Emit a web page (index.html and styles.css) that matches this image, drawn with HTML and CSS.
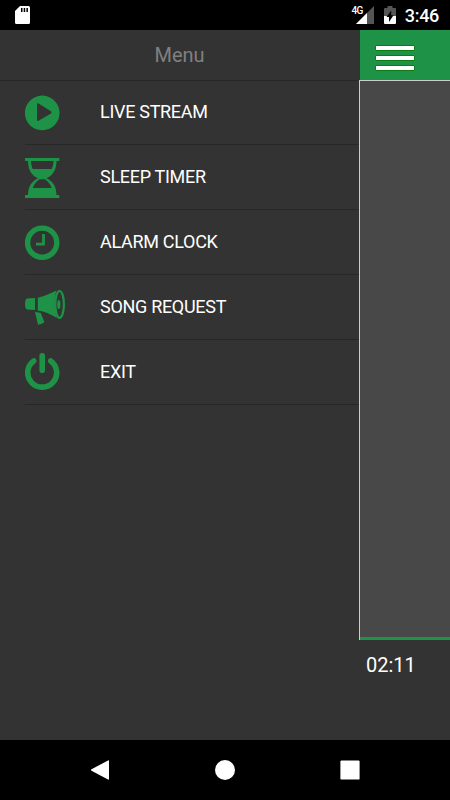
FILE: index.html
```html
<!DOCTYPE html>
<html lang="en">

<head>
    <meta charset="UTF-8">
    <meta name="viewport" content="width=device-width, initial-scale=1.0">
    <title>Menu</title>
    <link rel="stylesheet" href="styles.css">
</head>

<body>

<div class="status-bar">
    <svg class="sd-card" width="16" height="18" viewBox="0 0 16 18">
        <path fill="#fff" d="M5 0h8.500q1.500 0 1.500 1.500v15q0 1.500-1.500 1.500h-12Q0 18 0 16.500V5z"/>
        <path fill="#000" d="M6 2h1.500v4H6zM8.700 2h1.500v4H8.700zM11.400 2h1.500v4h-1.500z"/>
    </svg>
    <div class="status-icons">
        <span class="network">4G</span>
        <svg class="signal" width="18" height="18" viewBox="0 0 18 18">
            <path fill="#555" d="M18 0v18H0z"/>
            <path fill="#fff" d="M11 7v11H0z"/>
        </svg>
        <svg class="battery" width="12" height="18" viewBox="0 0 12 18">
            <path fill="#555" d="M3.500 0h5v2H11q1 0 1 1v7H0V3q0-1 1-1h2.500z"/>
            <path fill="#fff" d="M0 10h12v7q0 1-1 1H1q-1 0-1-1z"/>
            <path fill="#000" d="M7.200 4.500v4.700H9.500L5 16v-5H2.500z"/>
        </svg>
        <span class="time">3:46</span>
    </div>
</div>

<div class="app">
    <nav class="menu">
        <div class="menu-title">Menu</div>
        <ul class="menu-list">
            <li>
                <svg width="40" height="40" viewBox="0 0 40 40">
                    <path fill-rule="evenodd" d="M17.200 2.600a17.300 17.300 0 1 0 .01 0zM12 11.500q0-1.800 1.600-1l12 7.500q2 1.400 0 2.800l-12 7q-1.600.8-1.600-1z"/>
                </svg>
                <span>LIVE STREAM</span>
            </li>
            <li>
                <svg width="40" height="40" viewBox="0 0 40 40">
                    <path d="M0 0h34.300v3H0zM0 37h34.300v3H0z"/>
                    <path fill-rule="evenodd" d="M3 2.500h28.500c0 9-3 14.500-10 17.800 7 3.300 10 8.700 10 17.700H3c0-9 3-14.400 10-17.700C6 17 3 11.500 3 2.500zM6 3c.2 3 .6 5.500 1.700 8h19c1.200-2.500 1.700-5 1.800-8zM7.700 30h19c-1.500-4-4-7.300-7-8.800h-5c-3 1.500-5.500 4.800-7 8.800z"/>
                </svg>
                <span>SLEEP TIMER</span>
            </li>
            <li>
                <svg width="40" height="40" viewBox="0 0 40 40">
                    <circle class="line" cx="17.200" cy="19.700" r="14.600" stroke-width="5.400"/>
                    <path class="line" stroke-width="2.800" d="M18.500 11v10.200H11"/>
                </svg>
                <span>ALARM CLOCK</span>
            </li>
            <li>
                <svg width="40" height="40" viewBox="0 0 40 40">
                    <path d="M2 10.500l8-.5v12l-8-.5Q0 20.500 0 16t2-5.500z"/>
                    <path d="M12.800 9.700C20 8 26 5 31.500 2.500 29 9 29 22 32 30 26 26.500 20 23.500 12.800 22.500z"/>
                    <path d="M10 23.800l5.800 1.200 3.600 9.300q-3 2.400-6.400 2.500z"/>
                    <ellipse class="line" cx="34.600" cy="16.400" rx="4.300" ry="13.400" stroke-width="2.200"/>
                    <ellipse cx="33.800" cy="16.500" rx="1.600" ry="4.500"/>
                </svg>
                <span>SONG REQUEST</span>
            </li>
            <li>
                <svg width="40" height="40" viewBox="0 0 40 40">
                    <path class="line round" stroke-width="5.600" d="M8.700 7.900a14.500 14.500 0 1 0 17 0M17.200 2.800v14.400"/>
                </svg>
                <span>EXIT</span>
            </li>
        </ul>
    </nav>

    <main class="page">
        <div class="toolbar">
            <div class="hamburger">
                <i></i>
                <i></i>
                <i></i>
            </div>
        </div>
        <div class="cover"></div>
        <div class="elapsed">02:11</div>
    </main>
</div>

<div class="nav-bar">
    <svg width="20" height="20" viewBox="0 0 20 20">
        <path d="M18 .5Q19 0 19 1v18q0 1-1 .5L1.500 10.700q-1-.7 0-1.400z"/>
    </svg>
    <svg width="20" height="20" viewBox="0 0 20 20">
        <circle cx="10" cy="10" r="10"/>
    </svg>
    <svg width="20" height="20" viewBox="0 0 20 20">
        <rect x=".4" y=".4" width="19.200" height="19.200" rx="1.200"/>
    </svg>
</div>

</body>
</html>
```

FILE: styles.css
```css
* {
    box-sizing: border-box;
}

body {
    display: flex;
    flex-direction: column;
    height: 800px;
    margin: 0;
    overflow: hidden;
    background-color: #333;
    color: #fff;
    font-family: Roboto, sans-serif;
}

svg {
    display: block;
    flex: none;
}

.status-bar {
    display: flex;
    justify-content: space-between;
    height: 30px;
    padding: 6px 11px 0 15px;
    background-color: #000;
}

.status-icons {
    display: flex;
}

.network {
    font-size: 10px;
    font-weight: 500;
    line-height: 10px;
    letter-spacing: -0.6px;
    margin-right: -7px;
}

.battery {
    margin: 0 9px 0 10px;
}

.time {
    font-size: 18px;
    font-weight: 500;
    line-height: 20px;
    letter-spacing: -0.3px;
}

.app {
    display: flex;
    height: 710px;
}

.menu {
    width: 359px;
}

.menu-title {
    height: 51px;
    border-bottom: 1px solid #282828;
    color: #808080;
    font-size: 20px;
    line-height: 50px;
    text-align: center;
}

.menu-list {
    list-style: none;
    margin: -1px 0 0;
    padding: 0 0 0 25px;
}

.menu-list li {
    display: flex;
    align-items: center;
    gap: 35px;
    height: 65px;
    padding-top: 2px;
    border-bottom: 1px solid #282828;
    font-size: 18px;
    line-height: 20px;
    letter-spacing: -0.3px;
}

.menu-list span {
    margin-top: -3px;
}

.menu-list svg {
    fill: #1e9347;
}

.menu-list .line {
    fill: none;
    stroke: #1e9347;
}

.menu-list .round {
    stroke-linecap: round;
}

.page {
    display: flex;
    flex-direction: column;
    flex: 1;
}

.toolbar {
    height: 50px;
    margin-left: 1px;
    padding: 15px 15px 0;
    background-color: #1e9347;
}

.hamburger {
    display: flex;
    flex-direction: column;
    gap: 4px;
    width: 40px;
}

.hamburger i {
    height: 6px;
    border: 1px solid #0a7d14;
    border-radius: 1px;
    background-color: #fff;
}

.cover {
    height: 560px;
    border-top: 1px solid #ccc;
    border-left: 1px solid #ccc;
    background: linear-gradient(#1e9347, #1e9347) bottom / 100% 3px no-repeat #484848;
}

.elapsed {
    padding: 13px 0 0 7px;
    font-size: 20px;
    line-height: 24px;
}

.nav-bar {
    display: flex;
    justify-content: space-between;
    align-items: center;
    height: 60px;
    padding: 0 90px;
    background-color: #000;
    fill: #fff;
}
```
